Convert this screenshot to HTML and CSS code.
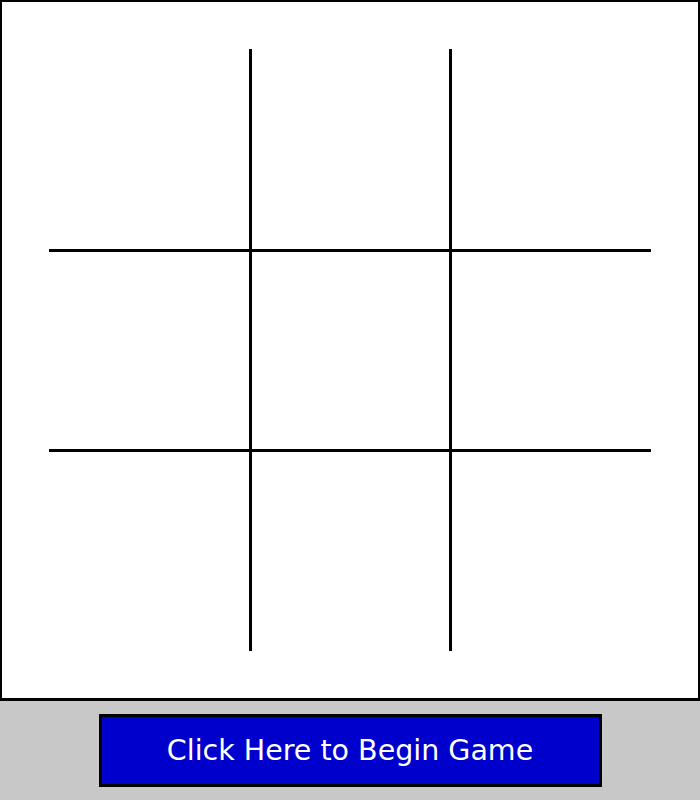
FILE: index.html
```html
<!DOCTYPE html>
<html>
<head>
<meta charset="utf-8">
<link rel="stylesheet" href="styles.css">
</head>
<body>
<div class="board">
  <svg class="grid" width="700" height="700" viewBox="0 0 700 700">
    <g stroke="#000" stroke-width="3">
      <line x1="250.5" y1="49" x2="250.5" y2="651"/>
      <line x1="450.5" y1="49" x2="450.5" y2="651"/>
      <line x1="49" y1="250.5" x2="651" y2="250.5"/>
      <line x1="49" y1="450.5" x2="651" y2="450.5"/>
    </g>
  </svg>
</div>
<div class="controls">
  <button class="start">Click Here to Begin Game</button>
</div>
</body>
</html>
```
FILE: styles.css
```css
html, body {
  margin: 0;
  padding: 0;
  background: #c8c8c8;
}
.board {
  position: relative;
  width: 700px;
  height: 701px;
  background: #fff;
  box-sizing: border-box;
  border: 2px solid #000;
  border-bottom-width: 3px;
}
.grid {
  position: absolute;
  left: -2px;
  top: -2px;
}
.controls {
  height: 99px;
  display: flex;
  justify-content: center;
  align-items: flex-start;
  padding-top: 13px;
  box-sizing: border-box;
}
.start {
  width: 503px;
  height: 73px;
  background: #0000cc;
  border: 3px solid #000;
  color: #fff;
  font-family: "DejaVu Sans", sans-serif;
  font-size: 28.5px;
  padding: 0;
  margin: 0;
}
```
